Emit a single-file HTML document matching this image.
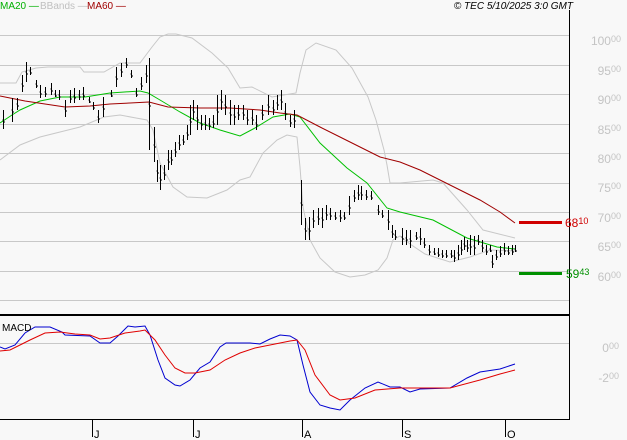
<!DOCTYPE html>
<html><head><style>
body{margin:0;background:#f8f8f8;width:627px;height:440px;overflow:hidden;font-family:"Liberation Sans",sans-serif}
</style></head><body>
<svg width="627" height="440" xmlns="http://www.w3.org/2000/svg" style="display:block">
<rect width="627" height="440" fill="#f8f8f8"/>
<g stroke="#c8c8c8" stroke-width="1" fill="none">
<line x1="0" y1="35.5" x2="569" y2="35.5"/><line x1="0" y1="65.5" x2="569" y2="65.5"/>
<line x1="0" y1="94.5" x2="569" y2="94.5"/><line x1="0" y1="124.5" x2="569" y2="124.5"/>
<line x1="0" y1="153.5" x2="569" y2="153.5"/><line x1="0" y1="183.5" x2="569" y2="183.5"/>
<line x1="0" y1="212.5" x2="569" y2="212.5"/><line x1="0" y1="241.5" x2="569" y2="241.5"/>
<line x1="0" y1="271.5" x2="569" y2="271.5"/><line x1="0" y1="300.5" x2="569" y2="300.5"/>
<line x1="0" y1="343.5" x2="569" y2="343.5"/>
</g>
<g fill="none" stroke="#c8c8c8" stroke-width="1">
<polyline points="0,83 16,83 22,72 36,68 48,67 80,67 84,72 104,72 120,63 140,63 152,47 160,37 168,34 176,34 192,38 212,53 228,68 240,88 252,87 272,97 296,93 300,73 306,50 316,43 336,50 352,68 368,97 376,120 384,150 387,165 390,183 400,183 433,180 443,183 467,210 483,230 515,238"/>
<polyline points="0,160 20,145 40,137 80,127 104,117 120,115 136,118 147,120 153,130 160,163 173,187 187,197 207,198 227,190 240,180 250,177 263,153 277,140 287,135 297,137 300,167 303,207 310,240 320,258 335,272 350,277 365,275 378,270 387,258 393,240 400,236 410,244 425,254 450,262 470,257 490,250 515,251"/>
</g>
<polyline fill="none" stroke="#00c000" stroke-width="1" points="0,123 12,115 20,110 40,101 60,97 85,97 110,93 140,91 148,93 160,100 180,112 200,123 220,130 240,136 255,128 273,117 290,114 300,117 320,143 347,168 367,183 387,208 400,212 433,220 467,238 497,247 515,249"/>
<polyline fill="none" stroke="#a00000" stroke-width="1" points="0,96 10,98 25,101 45,104 65,107 90,106 110,104 130,103 149,102 168,107 200,108 230,108 260,110 280,113 297,115 320,127 340,137 360,147 380,157 400,162 420,170 440,180 460,190 480,200 500,212 515,223"/>
<path id="bars" stroke="#000" stroke-width="1" fill="none" d=""/>
<line x1="569.5" y1="10" x2="569.5" y2="419" stroke="#000"/>
<line x1="0" y1="315" x2="569" y2="315" stroke="#000" stroke-width="2"/>
<line x1="0" y1="419.5" x2="570" y2="419.5" stroke="#000"/>
<polyline fill="none" stroke="#0000d0" stroke-width="1" points="0,347 5,349 15,345 25,333 35,327 50,327 62,332 65,335 90,336 100,343 110,343 118,336 128,326 135,327 145,326 150,335 158,360 165,378 175,385 180,386 190,380 200,368 210,362 220,347 226,343 250,343 260,344 270,339 280,335 290,336 297,340 303,365 310,392 320,405 330,408 340,410 350,400 365,388 378,382 390,387 400,387 410,392 420,389 450,388 467,378 480,372 500,369 515,364"/>
<polyline fill="none" stroke="#e00000" stroke-width="1" points="0,351 10,350 20,345 30,340 45,333 60,332 75,334 90,335 100,339 110,338 125,333 140,331 145,330 155,340 165,355 175,368 185,373 195,373 210,370 225,360 240,353 255,348 275,344 290,341 297,340 305,350 315,375 330,395 340,400 355,398 375,390 400,388 450,388 480,380 500,374 515,370"/>
<line x1="519" y1="222.5" x2="562" y2="222.5" stroke="#d00000" stroke-width="3"/>
<line x1="519" y1="273.5" x2="562" y2="273.5" stroke="#009000" stroke-width="3"/>
<g stroke="#000"><line x1="92.5" y1="419" x2="92.5" y2="437"/><line x1="193.5" y1="419" x2="193.5" y2="437"/><line x1="302.5" y1="419" x2="302.5" y2="437"/><line x1="402.5" y1="419" x2="402.5" y2="437"/><line x1="505.5" y1="419" x2="505.5" y2="437"/></g>
<g font-size="11" fill="#000"><text x="94" y="438">J</text><text x="195" y="438">J</text><text x="304" y="438">A</text><text x="404" y="438">S</text><text x="507" y="438">O</text></g>
<text x="2" y="331" font-size="10" fill="#000">MACD</text>
<g font-size="10"><text x="0" y="9" fill="#00b000">MA20 —</text><text x="40" y="9" fill="#c0c0c0">BBands —</text><text x="87" y="9" fill="#a00000">MA60 —</text></g>
<text x="573" y="9" font-size="10" font-style="italic" text-anchor="end" fill="#000">© TEC 5/10/2025 3:0 GMT</text>
<g font-size="12" fill="#c4c4c4" text-anchor="end">
<text x="621" y="45">100<tspan font-size="9" dy="-3">00</tspan></text>
<text x="621" y="75">95<tspan font-size="9" dy="-3">00</tspan></text>
<text x="621" y="104">90<tspan font-size="9" dy="-3">00</tspan></text>
<text x="621" y="134">85<tspan font-size="9" dy="-3">00</tspan></text>
<text x="621" y="163">80<tspan font-size="9" dy="-3">00</tspan></text>
<text x="621" y="192">75<tspan font-size="9" dy="-3">00</tspan></text>
<text x="621" y="222">70<tspan font-size="9" dy="-3">00</tspan></text>
<text x="621" y="251">65<tspan font-size="9" dy="-3">00</tspan></text>
<text x="621" y="281">60<tspan font-size="9" dy="-3">00</tspan></text>
<text x="619" y="352">0<tspan font-size="9" dy="-3">00</tspan></text>
<text x="619" y="382">-2<tspan font-size="9" dy="-3">00</tspan></text>
</g>
<text x="565" y="227" font-size="12" fill="#d00000">68<tspan font-size="9" dy="-3">10</tspan></text>
<text x="566" y="278" font-size="12" fill="#009000">59<tspan font-size="9" dy="-3">43</tspan></text>
</svg>
<script>
var b=[[3,110,129],[12,98,122],[17,98,110],[22,75,92],[26,62,82],[30,67,75],[36,80,88],[40,85,98],[45,87,97],[51,83,95],[55,90,97],[59,90,100],[65,100,117],[70,90,103],[74,88,103],[79,90,100],[83,87,100],[89,97,103],[93,102,110],[98,110,123],[103,97,117],[111,90,97],[116,67,87],[121,63,77],[126,58,68],[131,70,78],[136,88,97],[141,77,90],[146,65,83],[149,58,150],[154,127,162],[157,160,182],[160,165,190],[164,165,180],[168,150,170],[171,150,165],[175,142,157],[179,135,150],[183,135,145],[187,125,140],[190,105,135],[193,100,120],[197,105,130],[201,115,130],[205,115,130],[209,118,130],[213,115,128],[217,95,125],[221,90,110],[225,95,115],[230,100,125],[234,105,125],[238,105,120],[243,105,120],[247,110,125],[252,110,125],[256,115,130],[262,105,120],[268,95,115],[273,100,115],[277,95,110],[281,90,110],[285,103,120],[290,115,127],[294,110,128],[301,180,225],[305,218,240],[309,217,240],[313,210,228],[318,208,225],[322,208,228],[326,205,220],[330,208,220],[335,212,220],[340,210,222],[344,212,220],[349,196,215],[354,190,202],[358,185,200],[361,186,200],[366,190,200],[371,191,200],[378,205,215],[382,210,218],[388,210,230],[392,225,238],[395,230,240],[402,228,245],[406,230,245],[410,230,248],[416,232,240],[420,228,245],[424,238,248],[429,245,255],[434,248,255],[438,248,257],[442,250,258],[446,250,258],[451,250,258],[454,250,262],[458,245,260],[461,240,255],[464,237,250],[467,240,252],[470,235,255],[474,236,255],[478,235,245],[482,240,252],[486,245,255],[490,245,252],[492,255,268],[496,250,260],[500,246,257],[504,243,255],[508,246,255],[512,245,255],[515,245,252]];
var d="";b.forEach(function(a){var x=a[0]+.5,m=Math.round((a[1]+a[2])/2);d+="M"+x+" "+a[1]+"V"+a[2]+"M"+(x-1)+" "+m+"h1M"+x+" "+(m+2)+"h1.5";});
document.getElementById("bars").setAttribute("d",d);
</script>
</body></html>
